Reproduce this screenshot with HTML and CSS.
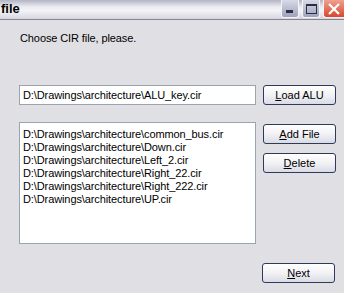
FILE: index.html
```html
<!DOCTYPE html>
<html lang="en">
    <head>
        <meta charset="UTF-8">
        <title>file</title>
        <link rel="stylesheet" href="styles.css">
    </head>
    <body>
        <div class="clJanela">
            <div class="clTitulo">
                <span class="clNome">file</span>
                <div class="clControles">
                    <span class="clCtrl clMin"><i></i></span>
                    <span class="clCtrl clMax"><i></i></span>
                    <span class="clCtrl clFechar">
                        <svg width="14" height="14" viewBox="0 0 14 14"><path d="M2 2 L12 12 M12 2 L2 12" stroke="#fff" stroke-width="2.2" fill="none"/></svg>
                    </span>
                </div>
            </div>
            <div class="clCorpo">
                <p class="clAviso">Choose CIR file, please.</p>
                <div class="clLinha clLinhaAlu">
                    <div class="clCaixa">D:\Drawings\architecture\ALU_key.cir</div>
                    <button type="button" class="clBotao"><u>L</u>oad ALU</button>
                </div>
                <div class="clLinha clLinhaLista">
                    <div class="clLista">
                        <div>D:\Drawings\architecture\common_bus.cir</div>
                        <div>D:\Drawings\architecture\Down.cir</div>
                        <div>D:\Drawings\architecture\Left_2.cir</div>
                        <div>D:\Drawings\architecture\Right_22.cir</div>
                        <div>D:\Drawings\architecture\Right_222.cir</div>
                        <div>D:\Drawings\architecture\UP.cir</div>
                    </div>
                    <div class="clLado">
                        <button type="button" class="clBotao"><u>A</u>dd File</button>
                        <button type="button" class="clBotao"><u>D</u>elete</button>
                    </div>
                </div>
                <div class="clRodape">
                    <button type="button" class="clBotao"><u>N</u>ext</button>
                </div>
            </div>
        </div>
    </body>
</html>
```
FILE: styles.css
```css
*{
    margin: 0px;
    padding: 0px;
    box-sizing: border-box;
}
body{
    background: #e0dfe3;
    font-family: "Liberation Sans", Arial, sans-serif;
    font-size: 11px;
    color: #000;
}
.clJanela{
    width: 344px;
    height: 293px;
    overflow: hidden;
}
.clTitulo{
    height: 20px;
    display: flex;
    align-items: flex-start;
    justify-content: space-between;
    background: linear-gradient(to bottom, #b3b4c4 0%, #e9eaf0 35%, #f4f4f8 55%, #d5d6e0 100%);
    border-bottom: 1px solid #85858f;
}
.clNome{
    font-weight: bold;
    font-size: 13px;
    padding-left: 1px;
    line-height: 17px;
}
.clControles{
    display: flex;
    gap: 3px;
}
.clCtrl{
    width: 18px;
    height: 18px;
    border: 1px solid #f4f4f8;
    border-top: none;
    border-radius: 0 0 3px 3px;
    background: linear-gradient(to bottom, #d8dae6, #9ea2bb);
    position: relative;
    display: flex;
    align-items: center;
    justify-content: center;
}
.clMin i{
    position: absolute;
    left: 4px;
    bottom: 4px;
    width: 7px;
    height: 3px;
    background: #2a2d46;
}
.clMax i{
    width: 11px;
    height: 10px;
    border: 1px solid #2a2d46;
    border-top-width: 2px;
}
.clFechar{
    width: 21px;
    border-right: none;
    border-radius: 0 0 0 3px;
    background: linear-gradient(to bottom, #f0a090, #d8482e);
}
.clCorpo{
    padding: 12px 8px 0 19px;
}
.clAviso{
    line-height: 13px;
    padding-left: 1px;
    letter-spacing: -0.1px;
}
.clLinha{
    display: flex;
    gap: 7px;
}
.clLinhaAlu{
    margin-top: 40px;
}
.clCaixa{
    width: 237px;
    height: 20px;
    background: #fff;
    border: 1px solid #9aa3b0;
    line-height: 18px;
    padding-left: 3px;
    letter-spacing: -0.1px;
}
.clBotao{
    width: 73px;
    height: 20px;
    font-family: inherit;
    font-size: 11px;
    color: #000;
    border: 1px solid #2e3a5c;
    border-radius: 3px;
    background: linear-gradient(to bottom, #ffffff 0%, #f2f2f5 50%, #d9dbe4 100%);
}
.clLinhaLista{
    margin-top: 17px;
}
.clLista{
    width: 237px;
    height: 122px;
    background: #fff;
    border: 1px solid #9aa3b0;
    padding: 5px 0 0 3px;
    line-height: 13px;
    letter-spacing: -0.1px;
}
.clLado{
    display: flex;
    flex-direction: column;
    gap: 9px;
    padding-top: 2px;
}
.clRodape{
    display: flex;
    justify-content: flex-end;
    padding-right: 1px;
    margin-top: 19px;
}
```
